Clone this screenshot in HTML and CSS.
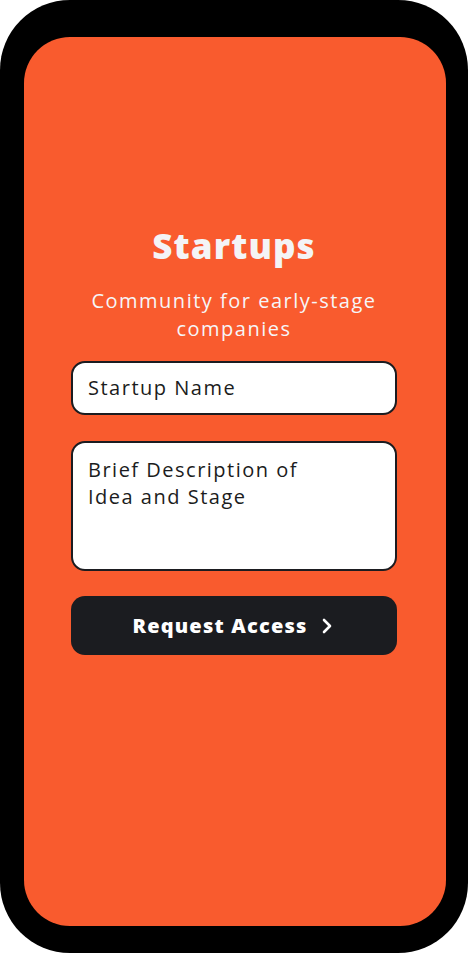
FILE: index.html
```html
<!DOCTYPE html>
<html>
<head>
<meta charset="utf-8">
<link rel="stylesheet" href="styles.css">
</head>
<body>
<div class="phone">
  <div class="screen">
    <div class="content">
      <h1 class="title">Startups</h1>
      <p class="subtitle">Community for early-stage companies</p>
      <div class="field field-input">Startup Name</div>
      <div class="field field-area">Brief Description of<br>Idea and Stage</div>
      <button class="btn">
        <span>Request Access</span>
        <svg class="chev" width="10" height="16" viewBox="0 0 10 16"><path d="M2 2 L8 8 L2 14" fill="none" stroke="#fff" stroke-width="2.6" stroke-linecap="round" stroke-linejoin="round"/></svg>
      </button>
    </div>
  </div>
</div>
</body>
</html>
```
FILE: styles.css
```css
html, body {
  margin: 0;
  padding: 0;
  background: #fff;
}
body {
  font-family: "Open Sans", "Liberation Sans", sans-serif;
}
.phone {
  width: 468px;
  height: 953px;
  box-sizing: border-box;
  background: #000;
  border-radius: 70px;
  padding: 37px 22px 27px 24px;
}
.screen {
  width: 422px;
  height: 889px;
  background: #f95b2e;
  border-radius: 46px;
  box-sizing: border-box;
  padding: 185px 49px 0 47px;
}
.content {
  display: flex;
  flex-direction: column;
  align-items: stretch;
}
.title {
  margin: 0;
  text-align: center;
  color: #f4f4f6;
  font-family: "Open Sans", sans-serif;
  font-weight: 800;
  font-size: 35px;
  line-height: 48px;
  letter-spacing: 1.1px;
}
.subtitle {
  margin: 17px 0 18px;
  text-align: center;
  color: #f6f6f8;
  font-size: 20px;
  line-height: 28px;
  letter-spacing: 1.5px;
  padding: 0;
}
.field {
  background: #fff;
  border: 2px solid #1b1c20;
  border-radius: 14px;
  box-sizing: border-box;
  color: #1b1c20;
  font-size: 20px;
  line-height: 27px;
  padding: 0 15px;
  letter-spacing: 1.5px;
}
.field-input {
  height: 54px;
  display: flex;
  align-items: center;
  padding-bottom: 1px;
}
.field-area {
  margin-top: 26px;
  height: 130px;
  padding-top: 13px;
}
.btn {
  margin-top: 25px;
  height: 59px;
  border: none;
  border-radius: 14px;
  background: #1b1c20;
  color: #fff;
  font-family: "Open Sans", sans-serif;
  font-weight: 800;
  font-size: 20px;
  display: flex;
  align-items: center;
  justify-content: center;
  gap: 14px;
  padding: 0 4px 0 0;
  letter-spacing: 1.2px;
}
.chev {
  display: block;
}
```
